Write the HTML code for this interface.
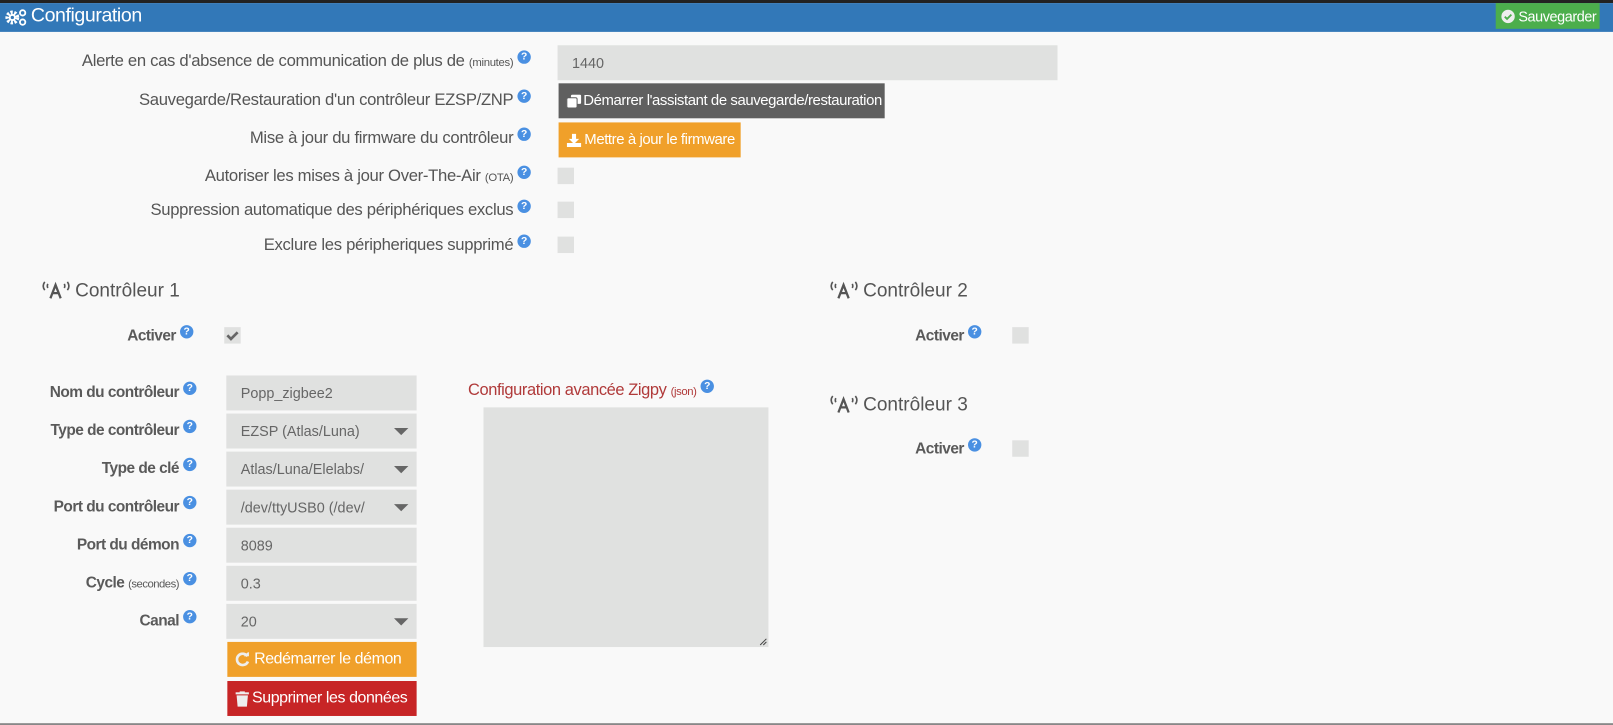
<!DOCTYPE html>
<html><head><meta charset="utf-8"><style>
*{margin:0;padding:0;box-sizing:border-box}
body{width:1613px;height:725px;overflow:hidden;background:#f9f9f9;font-family:"Liberation Sans",Arial,sans-serif;color:#555;position:relative}
#w{position:absolute;left:0;top:0;width:1568px;height:705px;transform:scale(1.0287);transform-origin:0 0}
.a{position:absolute}
.lbl{position:absolute;text-align:right;font-size:16.2px;color:#555;white-space:nowrap;letter-spacing:-0.3px}
.b{font-weight:bold;letter-spacing:-0.5px;font-size:15px;color:#5a5a5a}
small{font-size:11px;font-weight:normal}
.q{display:inline-block;width:13px;height:13px;border-radius:50%;background:#4a90e2;color:#fff;font-size:10px;font-weight:bold;text-align:center;line-height:13px;vertical-align:6px;margin-left:4px;letter-spacing:0}
.inp{position:absolute;background:#e0e1e0;color:#666;font-size:14px;padding-left:14px;display:flex;align-items:center}
.sel:after{content:"";position:absolute;right:8px;top:14px;border-left:7px solid transparent;border-right:7px solid transparent;border-top:7px solid #666}
.cb{position:absolute;width:16px;height:16px;background:#e0e1e0}
.btn{position:absolute;color:#fff;font-size:14.5px;display:flex;align-items:center;padding-left:8px;letter-spacing:-0.4px;white-space:nowrap;overflow:hidden}
.h{position:absolute;font-size:18.5px;color:#555;display:flex;align-items:center}
</style></head><body><div id="w">
<div class="a" style="left:0;top:0;width:1568px;height:3px;background:#222"></div>
<div class="a" style="left:0;top:3px;width:1568px;height:28px;background:#3278b8"></div>
<svg class="a" style="left:4px;top:8px" width="24" height="18" viewBox="0 0 24 18"><circle cx="8" cy="9" r="5" fill="none" stroke="#fff" stroke-width="3.5" stroke-dasharray="2.2 1.4"/><circle cx="8" cy="9" r="3.5" fill="#fff"/><circle cx="8" cy="9" r="1.6" fill="#3278b8"/><circle cx="18" cy="4.5" r="2.6" fill="none" stroke="#fff" stroke-width="1.8"/><circle cx="18" cy="13.5" r="2.6" fill="none" stroke="#fff" stroke-width="1.8"/></svg>
<div class="a" style="left:30px;top:5px;font-size:19px;color:#fff;letter-spacing:-0.4px">Configuration</div>
<div class="a" style="left:1454px;top:3px;width:101px;height:25px;background:#4cae4c;color:#fff;font-size:14px;display:flex;align-items:center;padding-left:5px;letter-spacing:-0.4px"><svg width="14" height="14" viewBox="0 0 14 14" style="margin-right:3px"><circle cx="7" cy="7" r="6.5" fill="#eee"/><path d="M3.8 7.2l2.2 2.2 4.2-4.2" stroke="#4cae4c" stroke-width="1.8" fill="none"/></svg>Sauvegarder</div>

<div class="lbl" style="left:0;width:516px;top:49px">Alerte en cas d'absence de communication de plus de <small>(minutes)</small><span class="q">?</span></div>
<div class="inp" style="left:542px;top:44px;width:486px;height:34px">1440</div>
<div class="lbl" style="left:0;width:516px;top:87px">Sauvegarde/Restauration d'un contrôleur EZSP/ZNP<span class="q">?</span></div>
<div class="btn" style="left:543px;top:81px;width:317px;height:34px;background:#5f5f5f"><svg width="14" height="13" viewBox="0 0 14 13" style="margin-right:2px"><rect x="4" y="0" width="10" height="9" rx="1.5" fill="#fff"/><rect x="0" y="3" width="10" height="10" rx="1.5" fill="#fff" stroke="#5f5f5f" stroke-width="1"/></svg>Démarrer l'assistant de sauvegarde/restauration</div>
<div class="lbl" style="left:0;width:516px;top:124px">Mise à jour du firmware du contrôleur<span class="q">?</span></div>
<div class="btn" style="left:543px;top:119px;width:177px;height:34px;background:#f0a02a"><svg width="14" height="13" viewBox="0 0 14 13" style="margin-right:3px"><path d="M5 0h4v5h3l-5 5-5-5h3z" fill="#fff"/><rect x="0" y="9" width="14" height="4" fill="#fff"/></svg>Mettre à jour le firmware</div>
<div class="lbl" style="left:0;width:516px;top:161px">Autoriser les mises à jour Over-The-Air <small>(OTA)</small><span class="q">?</span></div>
<div class="cb" style="left:542px;top:163px"></div>
<div class="lbl" style="left:0;width:516px;top:194px">Suppression automatique des périphériques exclus<span class="q">?</span></div>
<div class="cb" style="left:542px;top:196px"></div>
<div class="lbl" style="left:0;width:516px;top:228px">Exclure les péripheriques supprimé<span class="q">?</span></div>
<div class="cb" style="left:542px;top:230px"></div>

<svg class="a" style="left:40px;top:273px" width="28" height="18" viewBox="0 0 28 18"><path d="M3.5 1q-3 4 0 8M25.5 1q3 4 0 8M6.5 3q-1 2 0 4M22.5 3q1 2 0 4" stroke="#555" stroke-width="1.6" fill="none"/><path d="M9 17l5-13 5 13M11 12h6" stroke="#555" stroke-width="2.2" fill="none"/></svg>
<div class="h" style="left:73px;top:271px">Contrôleur 1</div>
<div class="lbl b" style="left:0;width:188px;top:316px">Activer<span class="q">?</span></div>
<div class="cb" style="left:218px;top:318px"><svg width="16" height="16"><path d="M3 8l3.5 3.5L13 5" stroke="#666" stroke-width="2.6" fill="none"/></svg></div>

<div class="lbl b" style="left:0;width:191px;top:371px">Nom du contrôleur<span class="q">?</span></div>
<div class="inp" style="left:220px;top:365px;width:185px;height:34px">Popp_zigbee2</div>
<div class="lbl b" style="left:0;width:191px;top:408px">Type de contrôleur<span class="q">?</span></div>
<div class="inp sel" style="left:220px;top:402px;width:185px;height:34px">EZSP (Atlas/Luna)</div>
<div class="lbl b" style="left:0;width:191px;top:445px">Type de clé<span class="q">?</span></div>
<div class="inp sel" style="left:220px;top:439px;width:185px;height:34px">Atlas/Luna/Elelabs/</div>
<div class="lbl b" style="left:0;width:191px;top:482px">Port du contrôleur<span class="q">?</span></div>
<div class="inp sel" style="left:220px;top:476px;width:185px;height:34px">/dev/ttyUSB0 (/dev/</div>
<div class="lbl b" style="left:0;width:191px;top:519px">Port du démon<span class="q">?</span></div>
<div class="inp" style="left:220px;top:513px;width:185px;height:34px">8089</div>
<div class="lbl b" style="left:0;width:191px;top:556px">Cycle <small>(secondes)</small><span class="q">?</span></div>
<div class="inp" style="left:220px;top:550px;width:185px;height:34px">0.3</div>
<div class="lbl b" style="left:0;width:191px;top:593px">Canal<span class="q">?</span></div>
<div class="inp sel" style="left:220px;top:587px;width:185px;height:34px">20</div>
<div class="btn" style="left:221px;top:624px;width:184px;height:34px;background:#f0a02a;font-size:15.5px"><svg width="14" height="14" viewBox="0 0 14 14" style="margin-right:4px"><path d="M11.5 4A5.5 5.5 0 1 0 12 9" stroke="#eee" stroke-width="2.6" fill="none"/><path d="M8 4h5V-1z" fill="#eee"/></svg>Redémarrer le démon</div>
<div class="btn" style="left:221px;top:662px;width:184px;height:34px;background:#c72526;font-size:15.5px"><svg width="13" height="15" viewBox="0 0 13 15" style="margin-right:3px"><rect x="0" y="1" width="13" height="2" fill="#eee"/><rect x="4" y="0" width="5" height="2" fill="#eee"/><path d="M1 4h11l-1 11H2z" fill="#eee"/></svg>Supprimer les données</div>

<div class="a" style="left:455px;top:369px;font-size:16px;color:#b03a3a;letter-spacing:-0.4px;white-space:nowrap">Configuration avancée Zigpy <small>(json)</small><span class="q">?</span></div>
<div class="a" style="left:470px;top:396px;width:277px;height:233px;background:#e0e1e0"><svg class="a" style="right:1px;bottom:1px" width="9" height="9"><path d="M8 2L2 8M8 5L5 8" stroke="#444" stroke-width="1"/></svg></div>

<svg class="a" style="left:806px;top:273px" width="28" height="18" viewBox="0 0 28 18"><path d="M3.5 1q-3 4 0 8M25.5 1q3 4 0 8M6.5 3q-1 2 0 4M22.5 3q1 2 0 4" stroke="#555" stroke-width="1.6" fill="none"/><path d="M9 17l5-13 5 13M11 12h6" stroke="#555" stroke-width="2.2" fill="none"/></svg>
<div class="h" style="left:839px;top:271px">Contrôleur 2</div>
<div class="lbl b" style="left:700px;width:254px;top:316px">Activer<span class="q">?</span></div>
<div class="cb" style="left:984px;top:318px"></div>
<svg class="a" style="left:806px;top:384px" width="28" height="18" viewBox="0 0 28 18"><path d="M3.5 1q-3 4 0 8M25.5 1q3 4 0 8M6.5 3q-1 2 0 4M22.5 3q1 2 0 4" stroke="#555" stroke-width="1.6" fill="none"/><path d="M9 17l5-13 5 13M11 12h6" stroke="#555" stroke-width="2.2" fill="none"/></svg>
<div class="h" style="left:839px;top:382px">Contrôleur 3</div>
<div class="lbl b" style="left:700px;width:254px;top:426px">Activer<span class="q">?</span></div>
<div class="cb" style="left:984px;top:428px"></div>

<div class="a" style="left:0;top:703px;width:1568px;height:2px;background:#888"></div>
</div></body></html>
